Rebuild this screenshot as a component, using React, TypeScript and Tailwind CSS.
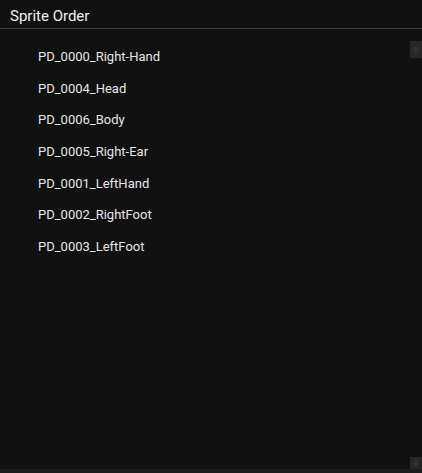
import React from "react";

const sprites = [
  "PD_0000_Right-Hand",
  "PD_0004_Head",
  "PD_0006_Body",
  "PD_0005_Right-Ear",
  "PD_0001_LeftHand",
  "PD_0002_RightFoot",
  "PD_0003_LeftFoot",
];

function Arrow({ up }: { up?: boolean }) {
  return (
    <svg width="10" height="10" viewBox="0 0 10 10" className={up ? "" : "rotate-180"}>
      <path d="M5 1 L9 5 H6.5 V9 H3.5 V5 H1 Z" fill="#333333" />
    </svg>
  );
}

export default function App() {
  return (
    <div
      className="w-[422px] h-[473px] bg-[#111111] flex flex-col overflow-hidden"
      style={{ fontFamily: "Roboto, 'Liberation Sans', sans-serif" }}
    >
      {/* Title */}
      <div className="h-[29px] flex items-center px-[10px] border-b border-[#3d3d3d] shrink-0">
        <span className="text-[15px] text-[#f0f0f0] leading-none pt-[5px]">Sprite Order</span>
      </div>

      <div className="flex flex-1 min-h-0">
        {/* List */}
        <div className="flex-1 pt-[12px]">
          {sprites.map((name) => (
            <div key={name} className="h-[31.67px] flex items-center pl-[38px]">
              <span className="text-[13px] text-[#e6e6e6]">{name}</span>
            </div>
          ))}
        </div>

        {/* Scrollbar */}
        <div className="w-[12px] flex flex-col justify-between pt-[12px]">
          <div className="h-[17px] bg-[#262626] flex items-center justify-center">
            <Arrow up />
          </div>
          <div className="h-[12px] bg-[#262626] flex items-center justify-center">
            <Arrow />
          </div>
        </div>
      </div>
      <div className="h-[4px] bg-[#1c1c1c] shrink-0" />
    </div>
  );
}
